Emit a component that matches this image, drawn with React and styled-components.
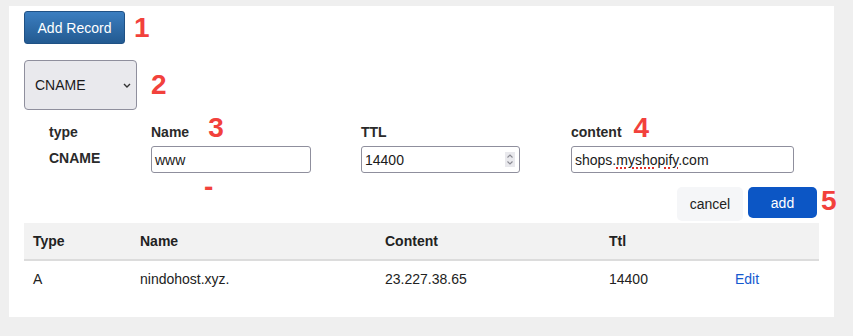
import React from "react";
import styled, { createGlobalStyle } from "styled-components";

const GlobalStyle = createGlobalStyle`
  body {
    margin: 0;
    background: #efefef;
    font-family: "Liberation Sans", Arial, sans-serif;
    font-size: 14px;
    color: #222;
  }
`;

const Panel = styled.div`
  box-sizing: border-box;
  width: 825px;
  height: 311px;
  margin: 6px 0 0 9px;
  padding: 5px 15px 0 15px;
  background: #fff;
`;

const Line = styled.div`
  display: flex;
  align-items: center;
  margin-bottom: ${p => p.$gap || 0}px;
`;

const Mark = styled.span`
  color: #f2413c;
  font-weight: bold;
  font-size: 28px;
  line-height: ${p => (p.$inline ? 0 : 1)};
  margin-left: ${p => p.$left || 0}px;
  ${p => p.$float && `width: 0; white-space: nowrap; margin-right: -${p.$left || 0}px;`}
`;

const PrimaryButton = styled.button`
  box-sizing: border-box;
  width: 101px;
  height: 33px;
  border: 1px solid #1f5185;
  border-radius: 3px;
  background: linear-gradient(#3b7ec0, #235a91);
  color: #fff;
  font-family: inherit;
  font-size: 14px;
  padding: 0;
`;

const TypeSelect = styled.div`
  box-sizing: border-box;
  width: 113px;
  height: 50px;
  display: flex;
  align-items: center;
  justify-content: space-between;
  padding: 0 5px 0 10px;
  background: #e9e9ed;
  border: 1px solid #8f8f9d;
  border-radius: 4px;
  font-size: 14px;
  color: #1a1a1a;
`;

const FormGrid = styled.div`
  display: grid;
  grid-template-columns: 102px 210px 210px 1fr;
  row-gap: 6px;
  margin: 14px 0 0 25px;
`;

const Label = styled.div`
  font-weight: bold;
  line-height: 16px;
  color: #2a2a2a;
  white-space: nowrap;
`;

const StaticValue = styled(Label)`
  padding-top: 4px;
`;

const Field = styled.div`
  box-sizing: border-box;
  width: ${p => p.$w}px;
  height: 27px;
  display: flex;
  align-items: center;
  justify-content: space-between;
  padding: 0 4px 0 3px;
  border: 1px solid #8f8f9d;
  border-radius: 3px;
  font-size: 14px;
  color: #1a1a1a;
  white-space: nowrap;
`;

const Misspelled = styled.span`
  text-decoration: underline dotted #e0302a;
  text-decoration-thickness: 1.5px;
  text-underline-offset: 3px;
`;

const Spinner = styled.div`
  width: 10px;
  height: 15px;
  background: #e9e9ed;
  display: flex;
  align-items: center;
  justify-content: center;
`;

const Hint = styled.div`
  height: 0;
  line-height: 0;
  padding-left: 53px;
  margin: 14px 0 -14px;
`;

const ButtonRow = styled.div`
  display: flex;
  justify-content: flex-end;
  align-items: flex-start;
  margin: 14px 2px 2px 0;
`;

const FlatButton = styled.button`
  box-sizing: border-box;
  height: ${p => (p.$primary ? 31 : 34)}px;
  width: ${p => (p.$primary ? 69 : 66)}px;
  margin-left: ${p => (p.$primary ? 5 : 0)}px;
  border: none;
  border-radius: 5px;
  padding: 0;
  font-family: inherit;
  font-size: 14px;
  background: ${p => (p.$primary ? "#0c56c5" : "#f5f6f8")};
  color: ${p => (p.$primary ? "#fff" : "#222")};
`;

const Table = styled.table`
  width: 795px;
  border-collapse: collapse;
  table-layout: fixed;
`;

const Th = styled.th`
  height: 36px;
  padding: 0 0 0 9px;
  text-align: left;
  font-weight: bold;
  background: #f2f2f2;
  border-bottom: 2px solid #dcdcdc;
  color: #222;
`;

const Td = styled.td`
  height: 36px;
  padding: 0 0 0 9px;
  color: ${p => (p.$link ? "#1559cf" : "#222")};
`;

const Chevron = () => (
  <svg width="8" height="5" viewBox="0 0 8 5">
    <path d="M1 1l3 3 3-3" fill="none" stroke="#333" strokeWidth="1.4" />
  </svg>
);

const Arrows = () => (
  <svg width="8" height="13" viewBox="0 0 8 13">
    <path d="M1.5 4.5L4 2l2.5 2.5M1.5 8.5L4 11l2.5-2.5" fill="none" stroke="#8a8a92" strokeWidth="1.1" />
  </svg>
);

const records = [
  { type: "A", name: "nindohost.xyz.", content: "23.227.38.65", ttl: 14400 },
];

const App = () => (
  <>
    <GlobalStyle />
    <Panel>
      <Line $gap={16}>
        <PrimaryButton>Add Record</PrimaryButton>
        <Mark $left={9}>1</Mark>
      </Line>
      <Line>
        <TypeSelect>
          CNAME
          <Chevron />
        </TypeSelect>
        <Mark $left={14}>2</Mark>
      </Line>
      <FormGrid>
        <Label>type</Label>
        <Label>
          Name
          <Mark $inline $left={19}>3</Mark>
        </Label>
        <Label>TTL</Label>
        <Label>
          content
          <Mark $inline $left={12}>4</Mark>
        </Label>
        <StaticValue>CNAME</StaticValue>
        <div>
          <Field $w={160}>www</Field>
          <Hint>
            <Mark $inline>-</Mark>
          </Hint>
        </div>
        <div>
          <Field $w={159}>
            14400
            <Spinner>
              <Arrows />
            </Spinner>
          </Field>
        </div>
        <div>
          <Field $w={223}>
            <span>
              shops.<Misspelled>myshopify</Misspelled>.com
            </span>
          </Field>
        </div>
      </FormGrid>
      <ButtonRow>
        <FlatButton>cancel</FlatButton>
        <FlatButton $primary>add</FlatButton>
        <Mark $float $left={4}>5</Mark>
      </ButtonRow>
      <Table>
        <colgroup>
          <col style={{ width: 107 }} />
          <col style={{ width: 245 }} />
          <col style={{ width: 224 }} />
          <col style={{ width: 126 }} />
          <col />
        </colgroup>
        <thead>
          <tr>
            <Th>Type</Th>
            <Th>Name</Th>
            <Th>Content</Th>
            <Th>Ttl</Th>
            <Th />
          </tr>
        </thead>
        <tbody>
          {records.map(r => (
            <tr key={r.name}>
              <Td>{r.type}</Td>
              <Td>{r.name}</Td>
              <Td>{r.content}</Td>
              <Td>{r.ttl}</Td>
              <Td $link>Edit</Td>
            </tr>
          ))}
        </tbody>
      </Table>
    </Panel>
  </>
);

export default App;
